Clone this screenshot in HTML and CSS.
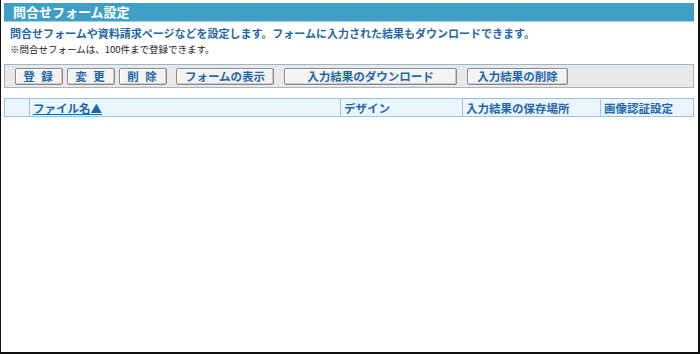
FILE: index.html
```html
<!DOCTYPE html>
<html lang="ja">
<head>
    <meta charset="UTF-8">
    <title>問合せフォーム設定</title>
    <link rel="stylesheet" href="styles.css">
</head>
<body>
    <div class="frame">
        <h1 class="title">問合せフォーム設定</h1>
        <p class="lead">問合せフォームや資料請求ページなどを設定します。フォームに入力された結果もダウンロードできます。</p>
        <p class="note">※問合せフォームは、100件まで登録できます。</p>

        <div class="toolbar">
            <button class="btn btn-s">登 録</button>
            <button class="btn btn-s">変 更</button>
            <button class="btn btn-s">削 除</button>
            <button class="btn btn-view">フォームの表示</button>
            <button class="btn btn-dl">入力結果のダウンロード</button>
            <button class="btn btn-del">入力結果の削除</button>
        </div>

        <table class="list">
            <tr>
                <th class="col-check"></th>
                <th class="col-name"><a href="#">ファイル名▲</a></th>
                <th class="col-design">デザイン</th>
                <th class="col-place">入力結果の保存場所</th>
                <th class="col-auth">画像認証設定</th>
            </tr>
        </table>
    </div>
</body>
</html>
```

FILE: styles.css
```css
html, body {
    margin: 0;
    padding: 0;
    background: #fff;
}
body {
    font-family: "Noto Sans CJK JP", "DejaVu Sans", sans-serif;
    color: #333;
}
.frame {
    box-sizing: border-box;
    width: 700px;
    height: 354px;
    border-left: 1px solid #111;
    border-right: 2px solid #111;
    border-bottom: 2px solid #111;
    padding: 3px 4px 0 3px;
}
.title {
    margin: 0;
    height: 18px;
    line-height: 18px;
    padding: 0 9px;
    background-color: #3d9fc6;
    border-bottom: 1px solid #9fd0e4;
    color: #fff;
    font-size: 13px;
    font-weight: 700;
}
.lead {
    margin: 3px 0 0 6px;
    font-size: 11px;
    line-height: 16px;
    font-weight: 700;
    color: #1f67a8;
}
.note {
    margin: 1px 0 0 6px;
    font-size: 9.5px;
    line-height: 14px;
    color: #222;
}
.toolbar {
    display: flex;
    align-items: center;
    margin-top: 8px;
    height: 22px;
    padding: 0 10px;
    background-color: #e9e9e9;
    border: 1px solid #9fb6c4;
}
.btn {
    height: 17px;
    padding: 0;
    margin-right: 4px;
    font-family: inherit;
    font-size: 11.5px;
    font-weight: 700;
    line-height: 15px;
    color: #1f67a8;
    background-color: #f3f3f3;
    border: 1px solid #8a8a8a;
    border-radius: 2px;
    box-shadow: inset -1px -1px 0 #c8c8c8, inset 1px 1px 0 #fff;
}
.btn-s {
    width: 48px;
    letter-spacing: 2px;
}
.btn-view {
    width: 98px;
    margin-left: 5px;
}
.btn-dl {
    width: 173px;
    margin-left: 6px;
}
.btn-del {
    width: 101px;
    margin-left: 6px;
}
.list {
    width: 100%;
    margin-top: 10px;
    border-collapse: collapse;
}
.list th {
    height: 17px;
    padding: 0 0 0 3px;
    background-color: #eaf5fd;
    border: 1px solid #9cc3da;
    font-size: 11.5px;
    font-weight: 700;
    color: #1f67a8;
    text-align: left;
    line-height: 16px;
}
.list a {
    color: #1f67a8;
    text-decoration: underline;
}
.col-check { width: 21px; }
.col-name { width: 307px; }
.col-design { width: 118px; }
.col-place { width: 134px; }
```
